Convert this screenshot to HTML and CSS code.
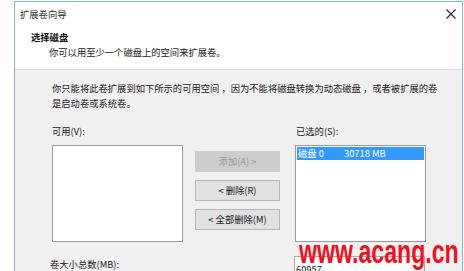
FILE: index.html
```html
<!DOCTYPE html>
<html lang="zh-CN">
<head>
<meta charset="utf-8">
<title>扩展卷向导</title>
<link rel="stylesheet" href="styles.css">
</head>
<body>
<div class="win">
  <div class="head">
    <div class="titlebar">
      <span class="title">扩展卷向导</span>
      <svg class="close" width="10" height="10" viewBox="0 0 10 10"><path d="M0.5 0.5L9.5 9.5M9.5 0.5L0.5 9.5" stroke="#222" stroke-width="1.1" fill="none"/></svg>
    </div>
    <div class="h1">选择磁盘</div>
    <div class="h2">你可以用至少一个磁盘上的空间来扩展卷。</div>
  </div>
  <div class="body">
    <p class="desc">你只能将此卷扩展到如下所示的可用空间&nbsp;，因为不能将磁盘转换为动态磁盘&nbsp;，或者被扩展的卷<br>是启动卷或系统卷。</p>
    <div class="cols">
      <div class="col">
        <div class="lbl">可用(V):</div>
        <div class="list"></div>
      </div>
      <div class="btns">
        <div class="btn disabled">添加(A) &gt;</div>
        <div class="btn">&lt; 删除(R)</div>
        <div class="btn">&lt; 全部删除(M)</div>
      </div>
      <div class="col right">
        <div class="lbl">已选的(S):</div>
        <div class="list"><div class="item"><span class="disk">磁盘 0</span><span>30718 MB</span></div></div>
      </div>
    </div>
    <div class="total">
      <span class="tlbl">卷大小总数(MB):</span>
      <div class="field">60957</div>
    </div>
  </div>
</div>
<div class="watermark">www.acang.cn</div>
</body>
</html>
```
FILE: styles.css
```css
html, body {
  margin: 0;
  padding: 0;
  background: #ffffff;
  width: 464px;
  height: 271px;
  overflow: hidden;
}
body {
  padding-top: 1px;
  position: relative;
  font-family: "Microsoft YaHei", "Noto Sans CJK SC", "Noto Sans", sans-serif;
  font-size: 9.3px;
  line-height: 15px;
  color: #1a1a1a;
  box-sizing: border-box;
}
.win {
  margin-left: 14px;
  width: 449px;
  height: 270px;
  overflow: hidden;
  border: 1px solid #86b5c8;
  border-bottom: 0;
  box-sizing: border-box;
  background: #f0f0f0;
}
.head {
  background: #ffffff;
  border-bottom: 1px solid #dadada;
  height: 68px;
  box-sizing: border-box;
}
.titlebar {
  display: flex;
  justify-content: space-between;
  align-items: center;
  padding: 5px 6px 0 5px;
  height: 15px;
}
.title { color: #2a2a2a; }
.close { display: block; margin-top: -2px; }
.h1 {
  margin-top: 8px;
  padding-left: 16px;
  font-weight: bold;
  color: #111;
}
.h2 {
  padding-left: 34px;
}
.body {
  padding: 11px 0 0 37px;
}
.desc {
  margin: 0;
}
.cols {
  display: flex;
  margin-top: 13px;
}
.col { display: flex; flex-direction: column; }
.lbl { height: 15px; margin-bottom: 6px; }
.col.right .lbl { padding-left: 1px; }
.list {
  width: 131px;
  height: 97px;
  background: #ffffff;
  border: 1px solid #9a9a9a;
  box-sizing: border-box;
  padding: 1px;
}
.btns {
  display: flex;
  flex-direction: column;
  gap: 8px;
  margin: 27px 15px 0 12px;
  width: 85px;
}
.btn {
  height: 21px;
  box-sizing: border-box;
  border: 1px solid #b5b5b5;
  background: #e1e1e1;
  text-align: center;
  line-height: 19px;
  color: #1a1a1a;
}
.btn.disabled {
  background: #cdcdcd;
  border-color: #cdcdcd;
  color: #9a9a9a;
}
.item {
  background: #3399ff;
  color: #ffffff;
  height: 13px;
  line-height: 13px;
  display: flex;
}
.disk { width: 46px; padding-left: 1px; }
.total {
  display: flex;
  align-items: flex-start;
  margin-top: 14px;
}
.tlbl {
  width: 244px;
  margin-left: -2px;
  margin-top: 1px;
}
.field {
  width: 131px;
  height: 20px;
  border: 1px solid #a8a8a8;
  box-sizing: border-box;
  background: #ffffff;
  padding-left: 1px;
  line-height: 24px;
}
.watermark {
  position: absolute;
  left: 299px;
  top: 234px;
  font-family: "Liberation Sans", Arial, sans-serif;
  font-weight: bold;
  font-size: 34px;
  line-height: 34px;
  color: #ee1122;
  transform: scaleX(0.68);
  transform-origin: 0 0;
  white-space: nowrap;
}
```
